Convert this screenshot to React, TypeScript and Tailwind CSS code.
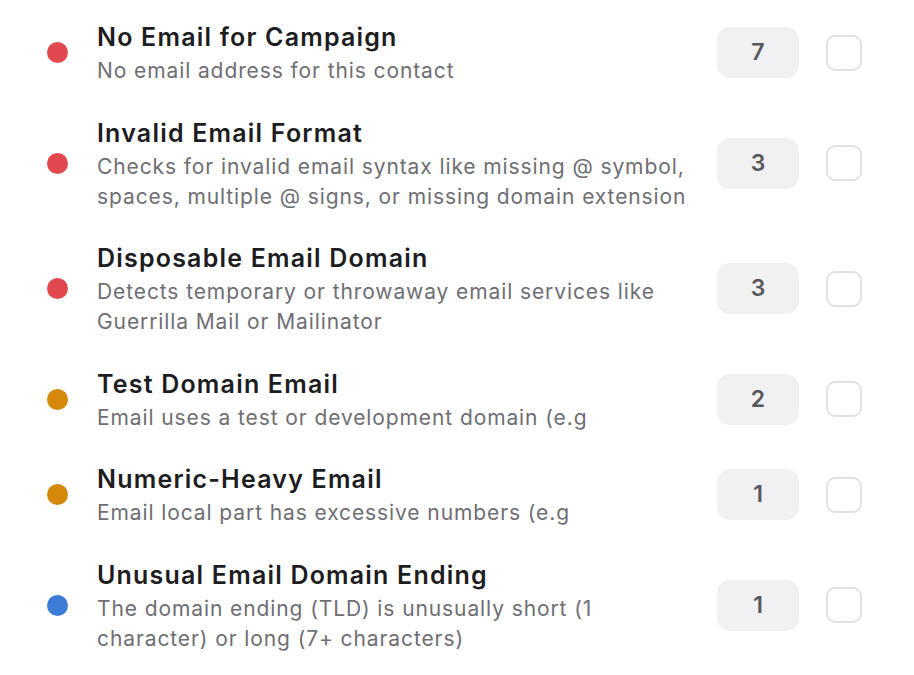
const rules = [
  {
    title: "No Email for Campaign",
    desc: "No email address for this contact",
    color: "bg-[#e2494f]",
    count: 7,
  },
  {
    title: "Invalid Email Format",
    desc: "Checks for invalid email syntax like missing @ symbol, spaces, multiple @ signs, or missing domain extension",
    color: "bg-[#e2494f]",
    count: 3,
  },
  {
    title: "Disposable Email Domain",
    desc: "Detects temporary or throwaway email services like Guerrilla Mail or Mailinator",
    color: "bg-[#e2494f]",
    count: 3,
  },
  {
    title: "Test Domain Email",
    desc: "Email uses a test or development domain (e.g",
    color: "bg-[#d4890b]",
    count: 2,
  },
  {
    title: "Numeric-Heavy Email",
    desc: "Email local part has excessive numbers (e.g",
    color: "bg-[#d4890b]",
    count: 1,
  },
  {
    title: "Unusual Email Domain Ending",
    desc: "The domain ending (TLD) is unusually short (1 character) or long (7+ characters)",
    color: "bg-[#3b7dd8]",
    count: 1,
  },
];

export default function App() {
  return (
    <div className="min-h-screen bg-white font-['Inter',sans-serif] antialiased">
      <div className="flex flex-col gap-[28.5px] pt-[19px] pl-[47px] pr-[52px]">
        {rules.map((rule) => (
          <div key={rule.title} className="flex items-center">
            <span className={`w-[21px] h-[21px] rounded-full shrink-0 ${rule.color}`} />
            <div className="ml-[29px] w-[600px] flex flex-col">
              <p className="text-[25px] leading-[36px] font-semibold text-[#1d1d1f] tracking-[1.2px]">
                {rule.title}
              </p>
              <p className="mt-[1px] text-[21px] leading-[30px] text-[#6e6e73] tracking-[0.9px]">
                {rule.desc}
              </p>
            </div>
            <div className="ml-auto w-[82px] h-[51px] rounded-[13px] bg-[#f1f1f4] flex items-center justify-center text-[23px] font-semibold text-[#58585c]">
              {rule.count}
            </div>
            <label className="ml-[27px] w-[36px] h-[36px] rounded-[9px] border-2 border-[#e2e2e4] bg-white shrink-0 cursor-pointer">
              <input type="checkbox" className="sr-only" />
            </label>
          </div>
        ))}
      </div>
    </div>
  );
}
